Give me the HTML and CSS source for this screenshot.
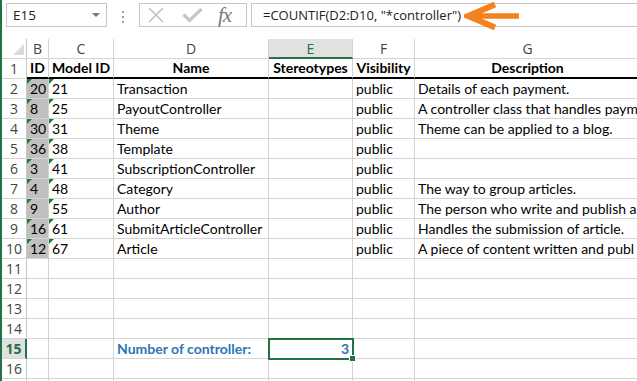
FILE: index.html
```html
<!DOCTYPE html>
<html lang="en">
<head>
    <meta charset="UTF-8">
    <title>COUNTIF controller</title>
    <link rel="stylesheet" href="styles.css">
</head>
<body>

<div class="app">
    <div class="formula-bar">
        <div class="name-box">
            <span>E15</span>
            <span class="caret"></span>
        </div>
        <div class="grip"><i></i><i></i><i></i></div>
        <div class="fx-buttons">
            <svg width="16" height="16" viewBox="0 0 16 16"><path d="M1 1 L15 15 M15 1 L1 15" stroke="#c3c3c3" stroke-width="1.6" fill="none"/></svg>
            <svg width="21" height="16" viewBox="0 0 21 16"><path d="M1.5 7.5 L7.5 13.5 L19.5 2" stroke="#c6c6c6" stroke-width="3.2" fill="none"/></svg>
            <span class="fx">fx</span>
        </div>
        <div class="formula-input">
            <span class="formula">=COUNTIF(D2:D10, "*controller")</span>
            <svg class="arrow" width="56" height="28" viewBox="0 0 56 28">
                <path d="M31 2.5 L4 14 L31 25.5" stroke="#f5821f" stroke-width="6" fill="none" stroke-linejoin="miter"/>
                <path d="M7 14 L55 14" stroke="#f5821f" stroke-width="5.5"/>
            </svg>
        </div>
    </div>

    <div class="sheet">
        <!-- column headers -->
        <div class="corner"><span class="corner-tri"></span></div>
        <div class="ch">B</div>
        <div class="ch">C</div>
        <div class="ch">D</div>
        <div class="ch ch-active">E</div>
        <div class="ch">F</div>
        <div class="ch">G</div>

        <!-- row 1 -->
        <div class="rh">1</div>
        <div class="c head">ID</div>
        <div class="c head">Model ID</div>
        <div class="c head">Name</div>
        <div class="c head">Stereotypes</div>
        <div class="c head">Visibility</div>
        <div class="c head">Description</div>

        <div class="rh">2</div>
        <div class="c id flag">20</div><div class="c flag">21</div><div class="c">Transaction</div><div class="c"></div><div class="c">public</div><div class="c">Details of each payment.</div>
        <div class="rh">3</div>
        <div class="c id flag">8</div><div class="c flag">25</div><div class="c">PayoutController</div><div class="c"></div><div class="c">public</div><div class="c">A controller class that handles paym</div>
        <div class="rh">4</div>
        <div class="c id flag">30</div><div class="c flag">31</div><div class="c">Theme</div><div class="c"></div><div class="c">public</div><div class="c">Theme can be applied to a blog.</div>
        <div class="rh">5</div>
        <div class="c id flag">36</div><div class="c flag">38</div><div class="c">Template</div><div class="c"></div><div class="c">public</div><div class="c"></div>
        <div class="rh">6</div>
        <div class="c id flag">3</div><div class="c flag">41</div><div class="c">SubscriptionController</div><div class="c"></div><div class="c">public</div><div class="c"></div>
        <div class="rh">7</div>
        <div class="c id flag">4</div><div class="c flag">48</div><div class="c">Category</div><div class="c"></div><div class="c">public</div><div class="c">The way to group articles.</div>
        <div class="rh">8</div>
        <div class="c id flag">9</div><div class="c flag">55</div><div class="c">Author</div><div class="c"></div><div class="c">public</div><div class="c">The person who write and publish a</div>
        <div class="rh">9</div>
        <div class="c id flag">16</div><div class="c flag">61</div><div class="c">SubmitArticleController</div><div class="c"></div><div class="c">public</div><div class="c">Handles the submission of article.</div>
        <div class="rh">10</div>
        <div class="c id flag">12</div><div class="c flag">67</div><div class="c">Article</div><div class="c"></div><div class="c">public</div><div class="c">A piece of content written and publ</div>

        <div class="rh">11</div><div class="c"></div><div class="c"></div><div class="c"></div><div class="c"></div><div class="c"></div><div class="c"></div>
        <div class="rh">12</div><div class="c"></div><div class="c"></div><div class="c"></div><div class="c"></div><div class="c"></div><div class="c"></div>
        <div class="rh">13</div><div class="c"></div><div class="c"></div><div class="c"></div><div class="c"></div><div class="c"></div><div class="c"></div>
        <div class="rh">14</div><div class="c"></div><div class="c"></div><div class="c"></div><div class="c"></div><div class="c"></div><div class="c"></div>

        <div class="rh rh-active">15</div>
        <div class="c"></div><div class="c"></div>
        <div class="c blue">Number of controller:</div>
        <div class="c blue num selected">3</div>
        <div class="c"></div><div class="c"></div>

        <div class="rh">16</div><div class="c"></div><div class="c"></div><div class="c"></div><div class="c"></div><div class="c"></div><div class="c"></div>
        <div class="rh"></div><div class="c"></div><div class="c"></div><div class="c"></div><div class="c"></div><div class="c"></div><div class="c"></div>
    </div>
</div>

</body>
</html>
```

FILE: styles.css
```css
body {
    margin: 0;
    background: #fff;
    overflow: hidden;
}

.app {
    width: 640px;
    height: 381px;
    border-left: 2px solid #217346;
    overflow: hidden;
}

/* formula bar */
.formula-bar {
    display: flex;
    align-items: flex-start;
    height: 39px;
    padding-top: 3px;
    box-sizing: border-box;
    font-family: "Open Sans", sans-serif;
}

.name-box {
    display: flex;
    align-items: center;
    justify-content: space-between;
    width: 101px;
    height: 24px;
    margin-left: 4px;
    padding: 0 6px 0 6px;
    box-sizing: border-box;
    border: 1px solid #c6c6c6;
    font-size: 13.5px;
    color: #222;
}

.caret {
    width: 0;
    height: 0;
    border-left: 4px solid transparent;
    border-right: 4px solid transparent;
    border-top: 4px solid #777;
}

.grip {
    display: flex;
    flex-direction: column;
    gap: 3px;
    width: 32px;
    align-items: center;
    padding-top: 8px;
}

.grip i {
    width: 2px;
    height: 2px;
    background: #a0a0a0;
}

.fx-buttons {
    display: flex;
    align-items: center;
    width: 108px;
    height: 24px;
    box-sizing: border-box;
    border: 1px solid #c6c6c6;
    padding-left: 8px;
}

.fx-buttons svg:nth-child(2) {
    margin-left: 18px;
}

.fx {
    margin-left: 15px;
    font-family: "Liberation Serif", serif;
    font-style: italic;
    font-size: 21px;
    color: #7a7a7a;
    line-height: 20px;
    letter-spacing: -1px;
}

.formula-input {
    display: flex;
    align-items: center;
    flex: 1;
    height: 24px;
    margin-left: 4px;
    box-sizing: border-box;
    border: 1px solid #c6c6c6;
    border-right: none;
    padding-left: 11px;
}

.formula {
    font-size: 13px;
    color: #222;
}

.arrow {
    margin-left: 3px;
    margin-top: 2px;
}

/* sheet */
.sheet {
    display: grid;
    grid-template-columns: 25px 22px 65px 155px 84px 62px 226px;
    grid-template-rows: 20px;
    grid-auto-rows: 20px;
}

.corner,
.ch,
.rh {
    box-sizing: border-box;
    border-right: 1px solid #d4d4d4;
    border-bottom: 1px solid #d4d4d4;
    font-family: "Open Sans", sans-serif;
    font-size: 14px;
    color: #444;
    text-align: center;
    line-height: 19px;
}

.corner {
    position: relative;
    border-right-color: #c6c6c6;
}

.corner-tri {
    position: absolute;
    right: 2px;
    bottom: 3px;
    width: 0;
    height: 0;
    border-left: 11px solid transparent;
    border-bottom: 11px solid #dadada;
}

.ch-active {
    background: #e1e1e1;
    color: #217346;
    border-bottom: 2px solid #217346;
}

.rh {
    border-right-color: #c6c6c6;
}

.rh-active {
    background: #e1e1e1;
    color: #217346;
    font-weight: bold;
    border-right: 2px solid #217346;
}

.c {
    position: relative;
    box-sizing: border-box;
    border-right: 1px solid #d4d4d4;
    border-bottom: 1px solid #d4d4d4;
    padding: 0 3px;
    font-family: "Lato", sans-serif;
    font-size: 14px;
    line-height: 20px;
    color: #000;
    white-space: nowrap;
    overflow: hidden;
}

.head {
    font-weight: bold;
    text-align: center;
    border-bottom: 2px solid #000;
    padding: 0;
    line-height: 18px;
}

.id {
    background: #c0c0c0;
}

.flag::before {
    content: "";
    position: absolute;
    top: 0;
    left: 0;
    border-top: 5px solid #1e7b34;
    border-right: 5px solid transparent;
}

.blue {
    color: #2e75b6;
    font-weight: bold;
}

.num {
    text-align: right;
}

.selected {
    overflow: visible;
    outline: 2px solid #217346;
    outline-offset: -1px;
    z-index: 1;
}

.selected::after {
    content: "";
    position: absolute;
    right: -4px;
    bottom: -4px;
    width: 5px;
    height: 5px;
    background: #217346;
    border: 1px solid #fff;
}
```
